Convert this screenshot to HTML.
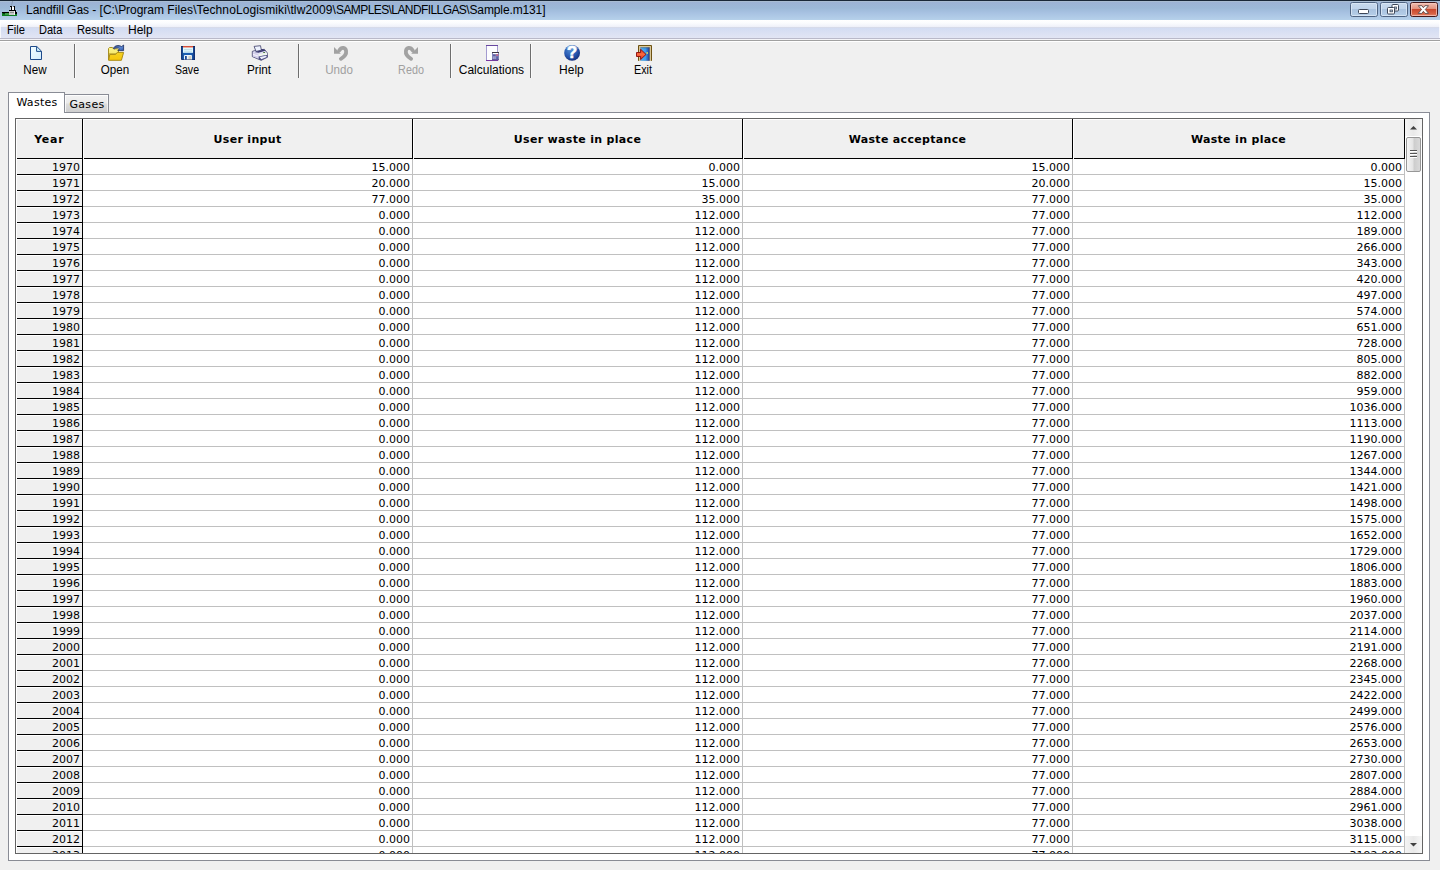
<!DOCTYPE html>
<html lang="en">
<head>
<meta charset="utf-8">
<title>Landfill Gas</title>
<style>
html,body{margin:0;padding:0}
body{width:1440px;height:870px;overflow:hidden;background:#f0f0f0;font-family:"Liberation Sans",sans-serif;font-size:12px;color:#000}
#win{position:absolute;left:0;top:0;width:1440px;height:870px;overflow:hidden;background:#f0f0f0}
#win div,#win span{box-sizing:border-box}
/* ---------- title bar ---------- */
#titlebar{position:absolute;left:0;top:0;width:1440px;height:20px;
 background:linear-gradient(to bottom,#1a2838 0,#1a2838 1px,#a9bdd3 1px,#a9bdd3 2px,#9db3d5 2px,#9cb9d8 8px,#a8c2e2 13px,#b6d1ea 20px)}
#appicon{position:absolute;left:0;top:0;width:20px;height:19px}
#appicon svg{display:block}
#title{position:absolute;left:26px;top:2px;height:16px;line-height:16px;font-size:12px;letter-spacing:-0.122px;white-space:nowrap;color:#000}
.capbtn{position:absolute;top:2px;height:15px;width:28px}
#bmin{left:1350px}#bres{left:1380px}#bclose{left:1410px}
.capbtn svg{display:block}
/* ---------- menu ---------- */
#menubar{position:absolute;left:0;top:20px;width:1440px;height:22px;
 background:linear-gradient(to bottom,#ffffff 0,#fbfcfe 3px,#eef0f9 7px,#d7dbea 7px,#d7dbea 8px,#d3dcf2 8px,#e2e5f4 18px,#b9b9c9 18px,#b9b9c9 19px,#f4f4f8 19px,#f4f4f8 20px,#a0a0a0 20px,#a0a0a0 21px,#ffffff 21px,#ffffff 22px)}
#menubar:before,#menubar:after{content:"";position:absolute;top:0;width:1px;height:18px;background:rgba(255,255,255,0.75)}
#menubar:before{left:0}#menubar:after{right:0}
#menubar span{transform-origin:0 50%;position:absolute;top:2px;height:16px;line-height:16px;font-size:12px;white-space:nowrap}
/* ---------- toolbar ---------- */
#toolbar{position:absolute;left:0;top:42px;width:1440px;height:42px}
.tbtn{position:absolute;top:0;width:72px;height:40px;text-align:center}
.tbtn .ico{position:absolute;left:24px;top:1px;width:24px;height:20px}
.tbtn .ico svg{display:block}
.tbtn .lbl{position:absolute;left:-9.6px;width:92px;top:20px;height:16px;line-height:16px;font-size:12px;text-align:center;white-space:nowrap}
.tbtn.dis .lbl{color:#a0a0a0}
.tsep{position:absolute;top:2px;width:2px;height:34px;border-left:1px solid #6e6e6e;border-right:1px solid #fafafa}
/* ---------- tabs ---------- */
#tabpage{position:absolute;left:8px;top:112px;width:1422px;height:749px;background:#fff;border:1px solid #898c95}
.tab{position:absolute;font-family:"DejaVu Sans","Liberation Sans",sans-serif;font-size:11px;white-space:nowrap;text-align:center;border:1px solid #898c95;border-bottom:none}
#tab-wastes{left:8px;top:92px;width:57px;height:21px;background:#fff;padding-left:1px;line-height:20px;letter-spacing:0.28px}
#tab-gases{left:64px;top:94px;width:45px;height:18px;padding-left:1px;box-shadow:inset 1px 1px 0 rgba(255,255,255,0.8),inset -1px 0 0 rgba(255,255,255,0.6);line-height:19px;letter-spacing:0.28px;background:linear-gradient(to bottom,#f2f2f2 0,#ebebeb 8px,#dddddd 9px,#cfcfcf 17px)}
/* ---------- grid ---------- */
#grid{position:absolute;left:15px;top:118px;width:1408px;height:736px;border:1px solid #646464;background:#fff;overflow:hidden;font-family:"DejaVu Sans","Liberation Sans",sans-serif;font-size:11px}
#ghead{position:absolute;left:0;top:0;width:1389px;height:40px;background:#fff}
.hc{position:absolute;top:0;height:40px;line-height:42px;text-align:center;font-weight:bold;letter-spacing:0.32px;background:#f0f0f0;border-right:1px solid #000;border-bottom:1px solid #000;box-shadow:inset 0 1px 0 #fff;padding-right:1px}
.hc:first-child{letter-spacing:0.7px;text-indent:0.5px}
#gbody{position:absolute;left:0;top:40px;width:1389px;height:694px;overflow:hidden}
.r{height:16px;width:1389px;white-space:nowrap;font-size:0}
.r .y,.r .c{display:inline-block;vertical-align:top;height:16px;line-height:15px;font-size:11px;font-style:normal;font-weight:normal;text-align:right;box-sizing:border-box}
.r .y{width:66px;margin-left:1px;background:#f0f0f0;border-right:1px solid #000;border-bottom:1px solid #000;box-shadow:inset 0 1px 0 #fff;padding-right:2px;line-height:17px}
.r .c{width:330px;border-right:1px solid #c0c0c0;border-bottom:1px solid #c0c0c0;padding-right:2px;line-height:17px}
.r .c.l{width:332px}
/* scrollbar */
#vscroll{position:absolute;left:1389px;top:0;width:17px;height:734px;background:#fff}
#sup{position:absolute;left:0;top:0;width:17px;height:17px;background:linear-gradient(to right,#f4f4f4,#e9e9e9 50%,#f6f6f6)}
#sdown{position:absolute;left:0;top:717px;width:17px;height:17px;background:linear-gradient(to right,#f4f4f4,#e9e9e9 50%,#f6f6f6)}
#sup svg,#sdown svg{display:block}
#thumb{position:absolute;left:1px;top:18px;width:15px;height:35px;border:1px solid #979797;border-radius:2px;background:linear-gradient(to right,#f5f5f5 0,#e4e4e4 45%,#cdcdcd 55%,#d9d9d9 100%)}
#thumb .g{position:absolute;left:3px;width:7px;height:2px;background:linear-gradient(to bottom,#555 0,#555 50%,#fff 50%)}
#thumb .g1{top:12px}#thumb .g2{top:15px}#thumb .g3{top:18px}

</style>
</head>
<body>
<div id="win">
<div id="titlebar"><div id="appicon"><svg width="20" height="19" viewBox="0 0 20 19"><path d="M12.6 1 L11.4 5.6" stroke="#7a8a9a" stroke-width="0.6" fill="none"/><rect x="2" y="13" width="15" height="3" fill="#0d7d22"/><rect x="5" y="13.4" width="10" height="1.2" fill="#5fae62"/><rect x="2" y="12" width="7" height="1" fill="#000"/><rect x="3" y="13" width="2" height="1" fill="#0a3a12"/><rect x="9" y="11" width="6" height="4" fill="#c9c9c9"/><rect x="10" y="12" width="4" height="1" fill="#8e8e8e"/><rect x="14" y="11" width="1" height="4" fill="#f4f4f4"/><rect x="9" y="10" width="7" height="1" fill="#000"/><rect x="10" y="6" width="2" height="1" fill="#000"/><rect x="11" y="6" width="1" height="4" fill="#000"/><rect x="13" y="6" width="2" height="1" fill="#000"/><rect x="14" y="6" width="1" height="4" fill="#000"/><rect x="12" y="6.6" width="2" height="3.4" fill="#fff"/><rect x="10" y="7" width="1" height="3" fill="#dfe7f2" opacity="0.8"/><rect x="15" y="10" width="1" height="4" fill="#000"/><rect x="16" y="12" width="1" height="2" fill="#000"/></svg></div><div id="title"><span style="letter-spacing:-0.03px">Landfill Gas - [C:\Program </span><span style="letter-spacing:0.11px">Files\TechnoLogismiki\</span><span style="letter-spacing:0.12px">tlw2009\</span><span style="letter-spacing:-0.6px">SAMPLES\</span><span style="letter-spacing:-0.58px">LANDFILLGAS</span><span>\Sample.m131]</span></div>
<div class="capbtn" id="bmin"><svg width="28" height="15" viewBox="0 0 28 15"><defs><linearGradient id="cb1" x1="0" y1="0" x2="0" y2="1"><stop offset="0" stop-color="#c9daee"/><stop offset="0.46" stop-color="#bfd3ea"/><stop offset="0.47" stop-color="#a9c2de"/><stop offset="1" stop-color="#b7d0ea"/></linearGradient></defs><rect x="0.5" y="0.5" width="27" height="14" rx="2" fill="url(#cb1)" stroke="#4f6482"/><rect x="1.5" y="1.5" width="25" height="12" rx="1" fill="none" stroke="#dbe8f6" stroke-opacity="0.85"/><rect x="8.5" y="7.5" width="10" height="4" rx="1" fill="#fff" stroke="#3c4658"/></svg></div><div class="capbtn" id="bres"><svg width="28" height="15" viewBox="0 0 28 15"><rect x="0.5" y="0.5" width="27" height="14" rx="2" fill="url(#cb1)" stroke="#4f6482"/><rect x="1.5" y="1.5" width="25" height="12" rx="1" fill="none" stroke="#dbe8f6" stroke-opacity="0.85"/><rect x="12" y="2.5" width="6.5" height="6.5" rx="1" fill="#fff" stroke="#3c4658"/><rect x="14.5" y="5" width="2" height="2" fill="#bcd0e6" stroke="#3c4658" stroke-width="0.8"/><rect x="7.5" y="5.5" width="7" height="6.5" rx="1" fill="#fff" stroke="#3c4658"/><rect x="10" y="8" width="2.5" height="1.8" fill="#bcd0e6" stroke="#3c4658" stroke-width="0.8"/></svg></div><div class="capbtn" id="bclose"><svg width="28" height="15" viewBox="0 0 28 15"><defs><linearGradient id="cb2" x1="0" y1="0" x2="0" y2="1"><stop offset="0" stop-color="#f3c3b6"/><stop offset="0.46" stop-color="#e2907c"/><stop offset="0.47" stop-color="#c9472c"/><stop offset="0.82" stop-color="#d86446"/><stop offset="1" stop-color="#ee9e88"/></linearGradient></defs><rect x="0.5" y="0.5" width="27" height="14" rx="2" fill="url(#cb2)" stroke="#43181a"/><rect x="1.5" y="1.5" width="25" height="12" rx="1" fill="none" stroke="#f6cbc0" stroke-opacity="0.7"/><path d="M8.3 3.7 L11.9 3.7 L13.4 5.7 L14.9 3.7 L18.5 3.7 L15.3 7.5 L18.6 11.4 L15 11.4 L13.4 9.3 L11.8 11.4 L8.2 11.4 L11.5 7.5 Z" fill="#fff" stroke="#5a4848" stroke-width="0.9" stroke-linejoin="round"/></svg></div></div>
<div id="menubar"><span style="left:7.3px;transform:scaleX(0.93)">File</span><span style="left:39.3px;transform:scaleX(0.92)">Data</span><span style="left:77.2px;transform:scaleX(0.93)">Results</span><span style="left:128px">Help</span></div>
<div id="toolbar">
<div class="tbtn" id="tb-new" style="left:-1px"><div class="ico"><svg width="24" height="20" viewBox="23 43 24 20"><defs><linearGradient id="gn" x1="0" y1="0" x2="1" y2="1"><stop offset="0" stop-color="#f2fdff"/><stop offset="1" stop-color="#d2ecfd"/></linearGradient></defs><path d="M30.5 46.5 H36.8 L41.5 51.2 V59.5 H30.5 Z" fill="url(#gn)"/><path d="M36.6 46.6 V51.4 H41.4 Z" fill="#d2f4ff"/><path d="M36.6 46.6 V51.4 H41.4" fill="none" stroke="#1d4a8a" stroke-width="1" stroke-linejoin="miter"/><path d="M30.5 46.5 H36.8 L41.5 51.2 V59.5 H30.5 Z" fill="none" stroke="#1d4a8a" stroke-width="1" stroke-linejoin="miter"/></svg></div><div class="lbl" style="transform:scaleX(0.97)">New</div></div>
<div class="tbtn" id="tb-open" style="left:79px"><div class="ico"><svg width="24" height="20" viewBox="103 43 24 20"><defs><linearGradient id="go1" x1="0" y1="0" x2="0" y2="1"><stop offset="0" stop-color="#fbf48e"/><stop offset="1" stop-color="#f1dc4a"/></linearGradient><linearGradient id="go2" x1="0" y1="0" x2="0" y2="1"><stop offset="0" stop-color="#f3d224"/><stop offset="1" stop-color="#f7c50a"/></linearGradient><linearGradient id="go3" x1="0" y1="0" x2="1" y2="1"><stop offset="0" stop-color="#2e3f7a"/><stop offset="0.6" stop-color="#5c8ad6"/><stop offset="1" stop-color="#2d4c9a"/></linearGradient></defs><path d="M108.5 60 V48.5 L109.5 47.5 H112.5 L113.5 48.8 H117.5 L118.5 49.8 V54 H108.5" fill="url(#go1)" stroke="#a89024" stroke-width="1" stroke-linejoin="round"/><path d="M108.6 60.3 L109.8 54.4 H115.6 L117.2 52.4 H123.6 L121.4 60.3 Z" fill="url(#go2)" stroke="#ab8c14" stroke-width="1" stroke-linejoin="round"/><path d="M113.4 48.4 C114.4 45.6 118.6 44.6 121.6 46.6 L123.6 45 L123.6 50.6 L117.8 50.6 L119.6 48.8 C118 47.4 115.6 47.6 114.6 48.8 Z" fill="url(#go3)" stroke="#1d2c5c" stroke-width="0.8" stroke-linejoin="round"/></svg></div><div class="lbl" style="transform:scaleX(0.965)">Open</div></div>
<div class="tbtn" id="tb-save" style="left:151px"><div class="ico"><svg width="24" height="20" viewBox="175 43 24 20"><defs><linearGradient id="gs1" x1="0" y1="0" x2="1" y2="0"><stop offset="0" stop-color="#12306e"/><stop offset="0.2" stop-color="#1c62b4"/><stop offset="0.8" stop-color="#1858ac"/><stop offset="1" stop-color="#102a6a"/></linearGradient><linearGradient id="gs2" x1="0" y1="0" x2="0" y2="1"><stop offset="0" stop-color="#c8301a"/><stop offset="1" stop-color="#f49a88"/></linearGradient></defs><path d="M181 46 H195 V60 H182 L181 59 Z" fill="url(#gs1)"/><rect x="181" y="46" width="14" height="0.8" fill="#1a2450"/><rect x="183" y="46.2" width="10" height="6.6" fill="#dffaff"/><rect x="183" y="46" width="10" height="1.7" fill="url(#gs2)"/><rect x="184" y="49.2" width="8" height="0.7" fill="#b9d2de"/><rect x="184" y="50.8" width="8" height="0.7" fill="#b9d2de"/><path d="M184 60 V56 Q184 55 185 55 H191 Q192 55 192 56 V60 Z" fill="#eef6fa"/><rect x="185" y="56" width="1.8" height="3.6" fill="#1a4a9a"/><rect x="188.4" y="56" width="3" height="3.6" fill="#d2d0c4"/><rect x="181" y="59.3" width="14" height="0.7" fill="#10245c" opacity="0.7"/></svg></div><div class="lbl" style="transform:scaleX(0.88)">Save</div></div>
<div class="tbtn" id="tb-print" style="left:223px"><div class="ico"><svg width="24" height="20" viewBox="247 43 24 20"><path d="M252.3 51.4 L254.6 50.6 L264.4 49.3 L267.2 52.8 L267.5 57.2 L261.2 60.3 L252.3 56.6 Z" fill="#dedcf2" stroke="#3a3a66" stroke-width="0.8" stroke-linejoin="round"/><path d="M258.6 54 L266.9 52.8 L267.1 55 L258.6 56.5 Z" fill="#f0f7ec"/><path d="M252.9 52.2 L258.2 54.2 L258.2 58.6 L252.9 56.4 Z" fill="#d4d0ec"/><path d="M253 53.8 L258 55.5 L258 56.6 L253 54.9 Z" fill="#f4f2fc"/><path d="M254.1 46.4 L260.5 45.7 L261.4 50.2 L256 51.4 Z" fill="#edf2fe" stroke="#3a3a66" stroke-width="0.8" stroke-linejoin="round"/><path d="M254.4 52 L256.2 51.6 L261.4 50.4 L261.2 49 L264.2 49.4 L265.4 50.8 L258.4 52.8 Z" fill="#3a3a70"/><path d="M258.6 56.6 L263.4 55.4 L267.2 55.1 L267.4 57.2 L261.2 60.2 L258.8 59.2 Z" fill="#4a4a82"/><path d="M259.6 57.1 L266.2 55.7 L266.7 57 L261.3 59.2 Z" fill="#eef0fc"/><rect x="263.2" y="52" width="1.8" height="0.9" fill="#3a6e2a"/></svg></div><div class="lbl" style="transform:scaleX(0.98)">Print</div></div>
<div class="tbtn dis" id="tb-undo" style="left:303px"><div class="ico"><svg width="24" height="20" viewBox="327 43 24 20"><path d="M340.9 58.8 C344.4 56.8, 346.5 53.8, 346.1 51 C345.6 47.4, 341.6 46.6, 339.2 50.4" fill="none" stroke="#a2a2a2" stroke-width="3.8" stroke-linecap="round"/><path d="M334 47 L334 53.7 L340.8 53.7 Z" fill="#a2a2a2"/></svg></div><div class="lbl" style="transform:scaleX(0.965)">Undo</div></div>
<div class="tbtn dis" id="tb-redo" style="left:375px"><div class="ico"><svg width="24" height="20" viewBox="399 43 24 20"><path d="M411.1 58.8 C407.6 56.8, 405.5 53.8, 405.9 51 C406.4 47.4, 410.4 46.6, 412.8 50.4" fill="none" stroke="#a2a2a2" stroke-width="3.8" stroke-linecap="round"/><path d="M418 47 L418 53.7 L411.2 53.7 Z" fill="#a2a2a2"/></svg></div><div class="lbl" style="transform:scaleX(0.9)">Redo</div></div>
<div class="tbtn" id="tb-calc" style="left:455px"><div class="ico"><svg width="24" height="20" viewBox="479 43 24 20"><rect x="486.5" y="45.5" width="11" height="15" fill="#fdfdff" stroke="#a39bd0" stroke-width="1"/><rect x="486" y="45" width="12" height="1" fill="#6848a0"/><rect x="486" y="60" width="12" height="1" fill="#7a3aa2"/><rect x="492" y="52" width="7" height="8" fill="#7f80b8"/><rect x="492" y="52" width="7" height="1" fill="#3e3646"/><rect x="493" y="53" width="5" height="1.2" fill="#ffffff"/><rect x="496" y="54.2" width="2.4" height="1.6" fill="#c4688c"/><rect x="493" y="54.6" width="2.4" height="1.2" fill="#54549c"/><rect x="494.6" y="56.4" width="1" height="3" fill="#a8a8d4"/><rect x="496.4" y="56.6" width="1.6" height="2.4" fill="#5860a8"/><rect x="493" y="56.6" width="1.2" height="2.4" fill="#a0a0cc"/><rect x="492" y="59.4" width="7" height="0.8" fill="#54408a"/></svg></div><div class="lbl">Calculations</div></div>
<div class="tbtn" id="tb-help" style="left:535px"><div class="ico"><svg width="24" height="20" viewBox="559 43 24 20"><defs><radialGradient id="gh" cx="0.4" cy="0.3" r="0.8"><stop offset="0" stop-color="#4f8ad0"/><stop offset="0.5" stop-color="#2a5cb4"/><stop offset="1" stop-color="#0f2470"/></radialGradient><linearGradient id="gh2" x1="0" y1="0" x2="0" y2="1"><stop offset="0" stop-color="#cfe2f6" stop-opacity="0.9"/><stop offset="1" stop-color="#6f9fd8" stop-opacity="0"/></linearGradient></defs><circle cx="572.1" cy="52.9" r="7.9" fill="url(#gh)"/><ellipse cx="572.1" cy="48.6" rx="5.6" ry="3.2" fill="url(#gh2)"/><text x="572" y="57.9" text-anchor="middle" font-family="Liberation Sans, sans-serif" font-weight="bold" font-size="16.6" fill="#ffffff" stroke="#ffffff" stroke-width="0.5">?</text></svg></div><div class="lbl">Help</div></div>
<div class="tbtn" id="tb-exit" style="left:607px"><div class="ico"><svg width="24" height="20" viewBox="631 43 24 20"><defs><linearGradient id="ge1" x1="0" y1="0" x2="1" y2="0"><stop offset="0" stop-color="#5ab4f4"/><stop offset="0.55" stop-color="#3a9cf0"/><stop offset="0.85" stop-color="#2c58b0"/><stop offset="1" stop-color="#1e2c6c"/></linearGradient><linearGradient id="ge2" x1="0" y1="0" x2="0" y2="1"><stop offset="0" stop-color="#e83a24"/><stop offset="0.5" stop-color="#fa6a3e"/><stop offset="1" stop-color="#e02a1c"/></linearGradient></defs><path d="M638.5 60.8 V45.5 H651.5 V60.8" fill="#cdb887" stroke="#6e5212" stroke-width="1"/><path d="M639.5 60.8 V46.6 H650.5 V60.8" fill="none" stroke="#d8c79a" stroke-width="1"/><rect x="640.4" y="47.4" width="9.2" height="13.4" fill="url(#ge1)"/><rect x="640.4" y="47.4" width="9.2" height="0.8" fill="#3a4a5a" opacity="0.6"/><rect x="646.4" y="52.2" width="1.6" height="1.6" fill="#d8e060"/><path d="M636.5 52.5 H640.6 V49.2 L646 54.4 L640.6 59.6 V56.5 H636.5 Z" fill="url(#ge2)" stroke="#8a0a08" stroke-width="0.9" stroke-linejoin="miter"/></svg></div><div class="lbl" style="transform:scaleX(0.9)">Exit</div></div>
<div class="tsep" style="left:74px"></div><div class="tsep" style="left:298px"></div><div class="tsep" style="left:450px"></div><div class="tsep" style="left:530px"></div>
</div>
<div id="tabpage"></div>
<div class="tab" id="tab-gases">Gases</div>
<div class="tab sel" id="tab-wastes">Wastes</div>
<div id="grid">
<div id="ghead"><div class="hc" style="left:1px;width:66px">Year</div><div class="hc" style="left:68px;width:329px">User input</div><div class="hc" style="left:398px;width:329px">User waste in place</div><div class="hc" style="left:728px;width:329px">Waste acceptance</div><div class="hc" style="left:1058px;width:331px">Waste in place</div></div>
<div id="gbody">
<div class="r"><span class="y">1970</span><span class="c">15.000</span><span class="c">0.000</span><span class="c">15.000</span><span class="c l">0.000</span></div>
<div class="r"><span class="y">1971</span><span class="c">20.000</span><span class="c">15.000</span><span class="c">20.000</span><span class="c l">15.000</span></div>
<div class="r"><span class="y">1972</span><span class="c">77.000</span><span class="c">35.000</span><span class="c">77.000</span><span class="c l">35.000</span></div>
<div class="r"><span class="y">1973</span><span class="c">0.000</span><span class="c">112.000</span><span class="c">77.000</span><span class="c l">112.000</span></div>
<div class="r"><span class="y">1974</span><span class="c">0.000</span><span class="c">112.000</span><span class="c">77.000</span><span class="c l">189.000</span></div>
<div class="r"><span class="y">1975</span><span class="c">0.000</span><span class="c">112.000</span><span class="c">77.000</span><span class="c l">266.000</span></div>
<div class="r"><span class="y">1976</span><span class="c">0.000</span><span class="c">112.000</span><span class="c">77.000</span><span class="c l">343.000</span></div>
<div class="r"><span class="y">1977</span><span class="c">0.000</span><span class="c">112.000</span><span class="c">77.000</span><span class="c l">420.000</span></div>
<div class="r"><span class="y">1978</span><span class="c">0.000</span><span class="c">112.000</span><span class="c">77.000</span><span class="c l">497.000</span></div>
<div class="r"><span class="y">1979</span><span class="c">0.000</span><span class="c">112.000</span><span class="c">77.000</span><span class="c l">574.000</span></div>
<div class="r"><span class="y">1980</span><span class="c">0.000</span><span class="c">112.000</span><span class="c">77.000</span><span class="c l">651.000</span></div>
<div class="r"><span class="y">1981</span><span class="c">0.000</span><span class="c">112.000</span><span class="c">77.000</span><span class="c l">728.000</span></div>
<div class="r"><span class="y">1982</span><span class="c">0.000</span><span class="c">112.000</span><span class="c">77.000</span><span class="c l">805.000</span></div>
<div class="r"><span class="y">1983</span><span class="c">0.000</span><span class="c">112.000</span><span class="c">77.000</span><span class="c l">882.000</span></div>
<div class="r"><span class="y">1984</span><span class="c">0.000</span><span class="c">112.000</span><span class="c">77.000</span><span class="c l">959.000</span></div>
<div class="r"><span class="y">1985</span><span class="c">0.000</span><span class="c">112.000</span><span class="c">77.000</span><span class="c l">1036.000</span></div>
<div class="r"><span class="y">1986</span><span class="c">0.000</span><span class="c">112.000</span><span class="c">77.000</span><span class="c l">1113.000</span></div>
<div class="r"><span class="y">1987</span><span class="c">0.000</span><span class="c">112.000</span><span class="c">77.000</span><span class="c l">1190.000</span></div>
<div class="r"><span class="y">1988</span><span class="c">0.000</span><span class="c">112.000</span><span class="c">77.000</span><span class="c l">1267.000</span></div>
<div class="r"><span class="y">1989</span><span class="c">0.000</span><span class="c">112.000</span><span class="c">77.000</span><span class="c l">1344.000</span></div>
<div class="r"><span class="y">1990</span><span class="c">0.000</span><span class="c">112.000</span><span class="c">77.000</span><span class="c l">1421.000</span></div>
<div class="r"><span class="y">1991</span><span class="c">0.000</span><span class="c">112.000</span><span class="c">77.000</span><span class="c l">1498.000</span></div>
<div class="r"><span class="y">1992</span><span class="c">0.000</span><span class="c">112.000</span><span class="c">77.000</span><span class="c l">1575.000</span></div>
<div class="r"><span class="y">1993</span><span class="c">0.000</span><span class="c">112.000</span><span class="c">77.000</span><span class="c l">1652.000</span></div>
<div class="r"><span class="y">1994</span><span class="c">0.000</span><span class="c">112.000</span><span class="c">77.000</span><span class="c l">1729.000</span></div>
<div class="r"><span class="y">1995</span><span class="c">0.000</span><span class="c">112.000</span><span class="c">77.000</span><span class="c l">1806.000</span></div>
<div class="r"><span class="y">1996</span><span class="c">0.000</span><span class="c">112.000</span><span class="c">77.000</span><span class="c l">1883.000</span></div>
<div class="r"><span class="y">1997</span><span class="c">0.000</span><span class="c">112.000</span><span class="c">77.000</span><span class="c l">1960.000</span></div>
<div class="r"><span class="y">1998</span><span class="c">0.000</span><span class="c">112.000</span><span class="c">77.000</span><span class="c l">2037.000</span></div>
<div class="r"><span class="y">1999</span><span class="c">0.000</span><span class="c">112.000</span><span class="c">77.000</span><span class="c l">2114.000</span></div>
<div class="r"><span class="y">2000</span><span class="c">0.000</span><span class="c">112.000</span><span class="c">77.000</span><span class="c l">2191.000</span></div>
<div class="r"><span class="y">2001</span><span class="c">0.000</span><span class="c">112.000</span><span class="c">77.000</span><span class="c l">2268.000</span></div>
<div class="r"><span class="y">2002</span><span class="c">0.000</span><span class="c">112.000</span><span class="c">77.000</span><span class="c l">2345.000</span></div>
<div class="r"><span class="y">2003</span><span class="c">0.000</span><span class="c">112.000</span><span class="c">77.000</span><span class="c l">2422.000</span></div>
<div class="r"><span class="y">2004</span><span class="c">0.000</span><span class="c">112.000</span><span class="c">77.000</span><span class="c l">2499.000</span></div>
<div class="r"><span class="y">2005</span><span class="c">0.000</span><span class="c">112.000</span><span class="c">77.000</span><span class="c l">2576.000</span></div>
<div class="r"><span class="y">2006</span><span class="c">0.000</span><span class="c">112.000</span><span class="c">77.000</span><span class="c l">2653.000</span></div>
<div class="r"><span class="y">2007</span><span class="c">0.000</span><span class="c">112.000</span><span class="c">77.000</span><span class="c l">2730.000</span></div>
<div class="r"><span class="y">2008</span><span class="c">0.000</span><span class="c">112.000</span><span class="c">77.000</span><span class="c l">2807.000</span></div>
<div class="r"><span class="y">2009</span><span class="c">0.000</span><span class="c">112.000</span><span class="c">77.000</span><span class="c l">2884.000</span></div>
<div class="r"><span class="y">2010</span><span class="c">0.000</span><span class="c">112.000</span><span class="c">77.000</span><span class="c l">2961.000</span></div>
<div class="r"><span class="y">2011</span><span class="c">0.000</span><span class="c">112.000</span><span class="c">77.000</span><span class="c l">3038.000</span></div>
<div class="r"><span class="y">2012</span><span class="c">0.000</span><span class="c">112.000</span><span class="c">77.000</span><span class="c l">3115.000</span></div>
<div class="r"><span class="y">2013</span><span class="c">0.000</span><span class="c">112.000</span><span class="c">77.000</span><span class="c l">3192.000</span></div>
</div>
<div id="vscroll"><div id="sup"><svg width="17" height="17" viewBox="0 0 17 17"><path d="M5 10.5 L8.5 7 L12 10.5 Z" fill="#404040"/></svg></div><div id="thumb"><span class="g g1"></span><span class="g g2"></span><span class="g g3"></span></div><div id="sdown"><svg width="17" height="17" viewBox="0 0 17 17"><path d="M5 7 L12 7 L8.5 10.5 Z" fill="#404040"/></svg></div></div>
</div>
</div>
</body>
</html>
